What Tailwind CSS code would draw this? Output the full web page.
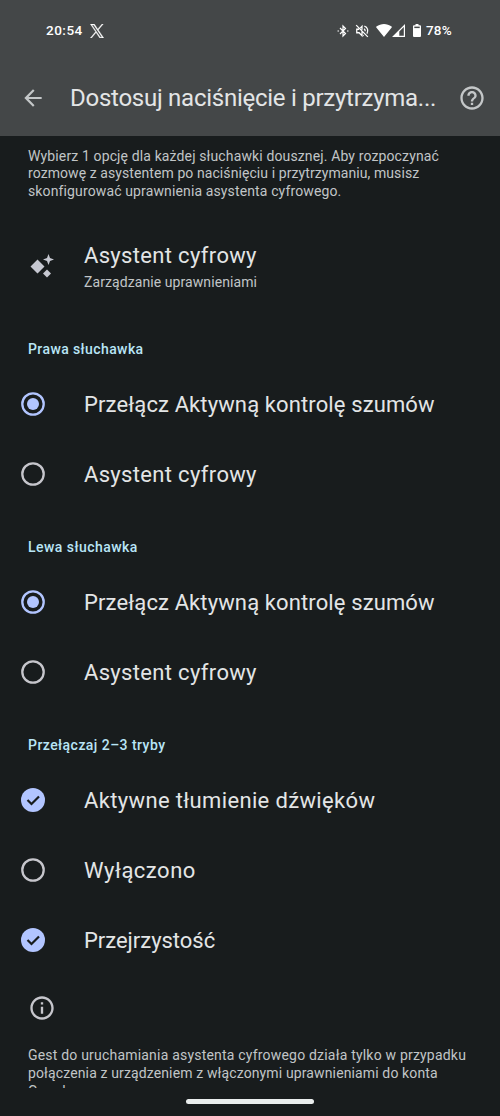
<!DOCTYPE html>
<html lang="pl">
<head>
<meta charset="utf-8">
<title>Dostosuj naciśnięcie i przytrzymanie</title>
<script src="https://cdn.jsdelivr.net/npm/@tailwindcss/browser@4"></script>
</head>
<body class="w-[500px] h-[1116px] overflow-hidden bg-[#181c1d] font-['Roboto','Noto_Sans',sans-serif] text-[#e3e5e6] flex flex-col whitespace-nowrap">
<header class="h-[136px] shrink-0 bg-[#444748] flex flex-col">
  <div class="h-[61px] pl-[46px] flex items-center text-white text-[13.5px] font-medium">
    <span class="tracking-[0.5px] w-[44px]">20:54</span>
    <svg class="size-[14px]" viewBox="0 0 24 24" fill="#fff" stroke="#fff" stroke-width="0.7"><path fill-rule="evenodd" d="M14.200 10.200 22.700 0h-2l-7.400 8.800L7.400 0H.6l9 13.300L.6 24h2l7.800-9.300 6.300 9.300h6.800zM3.300 1.600h3.100l14.300 20.900h-3.100z"/></svg>
    <svg class="ml-[233px] w-[12px] h-[14px]" viewBox="0 0 24 28" fill="none" stroke="#fff" stroke-width="2.400"><path d="m6 8 11 11-5 5V4l5 5L6 20"/><path d="M1 14h3M20 14h3"/></svg>
    <svg class="ml-[6px] size-[14px]" viewBox="0 0 24 24" fill="none" stroke="#fff" stroke-width="2.200"><path d="m2 2 20 20M7 9H3v6h4l5 5v-7M9 7l3-3v6M15.500 8q2 1.500 2 4.500M16 3.500c6 2 7 8 4.500 13M15 19.500l-1 .5"/></svg>
    <svg class="ml-[7px] w-[16px] h-[13px]" viewBox="0 0 16 13" fill="#fff"><path d="M8 13 .3 3.500C.1 3.200.1 2.800.4 2.600 5-.8 11-.8 15.600 2.600c.3.200.3.600.1.900z"/></svg>
    <svg class="w-[13px] h-[13px]" viewBox="0 0 13 13" fill="#fff"><path fill-rule="evenodd" d="M0 13 13 0v13zm7.300-1.200h4.500V2.900L7.300 7.400z"/></svg>
    <svg class="ml-[8px] w-[8px] h-[13px]" viewBox="0 0 8 13"><path fill="#fff" d="M2.500 0h3v1.300H7q1 0 1 1V12q0 1-1 1H1q-1 0-1-1V2.300q0-1 1-1h1.500z"/><path fill="#444748" d="M1.300 2.600h5.400v1.500H1.300z"/></svg>
    <span class="ml-[5px] tracking-[0.2px]">78%</span>
  </div>
  <div class="h-[75px] pl-[20px] pb-px flex items-center">
    <svg class="size-[26px]" viewBox="0 0 24 24" fill="#c4c7c8"><path d="M20 11H7.830l5.590-5.590L12 4l-8 8 8 8 1.410-1.410L7.830 13H20z"/></svg>
    <h1 class="ml-[24px] w-[368px] text-[24px] font-normal tracking-[-0.26px]">Dostosuj naciśnięcie i przytrzyma...</h1>
    <svg class="ml-[20px] size-[28px]" viewBox="0 0 24 24" fill="#c4c7c8"><path d="M11 18h2v-2h-2zm1-16C6.480 2 2 6.480 2 12s4.480 10 10 10 10-4.480 10-10S17.520 2 12 2zm0 18c-4.410 0-8-3.590-8-8s3.590-8 8-8 8 3.590 8 8-3.590 8-8 8zm0-14c-2.210 0-4 1.790-4 4h2c0-1.100.9-2 2-2s2 .9 2 2c0 2-3 1.750-3 5h2c0-2.250 3-2.500 3-5 0-2.210-1.790-4-4-4z"/></svg>
  </div>
</header>
<main class="h-[952px] overflow-hidden">
  <div class="h-[104px] pt-[11.500px] pl-[28px] text-[14px] leading-[17.8px] text-[#c1c5c7]">
    <p class="tracking-[0.13px]">Wybierz 1 opcję dla każdej słuchawki dousznej. Aby rozpoczynać</p>
    <p class="tracking-[0.08px]">rozmowę z asystentem po naciśnięciu i przytrzymaniu, musisz</p>
    <p class="tracking-[0.13px]">skonfigurować uprawnienia asystenta cyfrowego.</p>
  </div>
  <div class="h-[71px] pl-[28px] flex">
    <svg class="mt-[12px] size-[28px]" viewBox="0 0 28 28" fill="#c6c8d1"><path d="m9.500 7.500 7 7-7 7-7-7zM20.500 2l1.500 4 4 1.500-4 1.500-1.500 4L19 9l-4-1.500L19 6zM19 17.500l4 4-4 4-4-4z"/></svg>
    <div class="ml-[28px]">
      <p class="text-[22px] leading-[32px] tracking-[0.33px]">Asystent cyfrowy</p>
      <p class="text-[14px] leading-[20px] tracking-[0.08px] text-[#c1c5c7]">Zarządzanie uprawnieniami</p>
    </div>
  </div>
  <section>
    <h2 class="h-[58px] pt-[28px] pl-[28px] text-[14px] leading-[20px] font-medium text-[#b9e5f6] tracking-[0.4px]">Prawa słuchawka</h2>
    <div class="h-[70px] pl-[21px] flex items-center gap-[39px]"><svg class="size-[24px]" viewBox="0 0 24 24"><circle cx="12" cy="12" r="10.700" fill="none" stroke="#b2c5ff" stroke-width="2.300"/><circle cx="12" cy="12" r="6" fill="#b2c5ff"/></svg><p class="text-[22px] tracking-[0.12px]">Przełącz Aktywną kontrolę szumów</p></div>
    <div class="h-[70px] pl-[21px] flex items-center gap-[39px]"><svg class="size-[24px]" viewBox="0 0 24 24"><circle cx="12" cy="12" r="10.700" fill="none" stroke="#c6c6cc" stroke-width="2.300"/></svg><p class="text-[22px] tracking-[0.33px]">Asystent cyfrowy</p></div>
  </section>
  <section>
    <h2 class="h-[58px] pt-[28px] pl-[28px] text-[14px] leading-[20px] font-medium text-[#b9e5f6] tracking-[0.46px]">Lewa słuchawka</h2>
    <div class="h-[70px] pl-[21px] flex items-center gap-[39px]"><svg class="size-[24px]" viewBox="0 0 24 24"><circle cx="12" cy="12" r="10.700" fill="none" stroke="#b2c5ff" stroke-width="2.300"/><circle cx="12" cy="12" r="6" fill="#b2c5ff"/></svg><p class="text-[22px] tracking-[0.12px]">Przełącz Aktywną kontrolę szumów</p></div>
    <div class="h-[70px] pl-[21px] flex items-center gap-[39px]"><svg class="size-[24px]" viewBox="0 0 24 24"><circle cx="12" cy="12" r="10.700" fill="none" stroke="#c6c6cc" stroke-width="2.300"/></svg><p class="text-[22px] tracking-[0.33px]">Asystent cyfrowy</p></div>
  </section>
  <section>
    <h2 class="h-[58px] pt-[28px] pl-[28px] text-[14px] leading-[20px] font-medium text-[#b9e5f6] tracking-[0.45px]">Przełączaj 2–3 tryby</h2>
    <div class="h-[70px] pl-[21px] flex items-center gap-[39px]"><svg class="size-[24px]" viewBox="0 0 24 24"><circle cx="12" cy="12" r="12" fill="#b2c5ff"/><path d="m6.500 12 4 4 7.500-7.500" fill="none" stroke="#181c1d" stroke-width="2.200"/></svg><p class="text-[22px] tracking-[0.35px]">Aktywne tłumienie dźwięków</p></div>
    <div class="h-[70px] pl-[21px] flex items-center gap-[39px]"><svg class="size-[24px]" viewBox="0 0 24 24"><circle cx="12" cy="12" r="10.700" fill="none" stroke="#c6c6cc" stroke-width="2.300"/></svg><p class="text-[22px] tracking-[0.5px]">Wyłączono</p></div>
    <div class="h-[70px] pl-[21px] flex items-center gap-[39px]"><svg class="size-[24px]" viewBox="0 0 24 24"><circle cx="12" cy="12" r="12" fill="#b2c5ff"/><path d="m6.500 12 4 4 7.500-7.500" fill="none" stroke="#181c1d" stroke-width="2.200"/></svg><p class="text-[22px] tracking-[-0.03px]">Przejrzystość</p></div>
  </section>
  <footer class="pt-[19px] pl-[28px] text-[14px] leading-[17.8px] text-[#c1c5c7]">
    <svg class="size-[28px]" viewBox="0 0 24 24" fill="#c6c6cc"><path d="M11 7h2v2h-2zm0 4h2v6h-2zm1-9C6.480 2 2 6.480 2 12s4.480 10 10 10 10-4.480 10-10S17.520 2 12 2zm0 18c-4.410 0-8-3.590-8-8s3.590-8 8-8 8 3.590 8 8-3.590 8-8 8z"/></svg>
    <p class="mt-[25px] tracking-[0.2px]">Gest do uruchamiania asystenta cyfrowego działa tylko w przypadku</p>
    <p class="tracking-[0.13px]">połączenia z urządzeniem z włączonymi uprawnieniami do konta</p>
    <p class="tracking-[0.2px]">Google.</p>
  </footer>
</main>
<div class="h-[28px] flex justify-center pt-[11px]"><div class="w-[128px] h-[5px] rounded-full bg-[#e9eded]"></div></div>
</body>
</html>
